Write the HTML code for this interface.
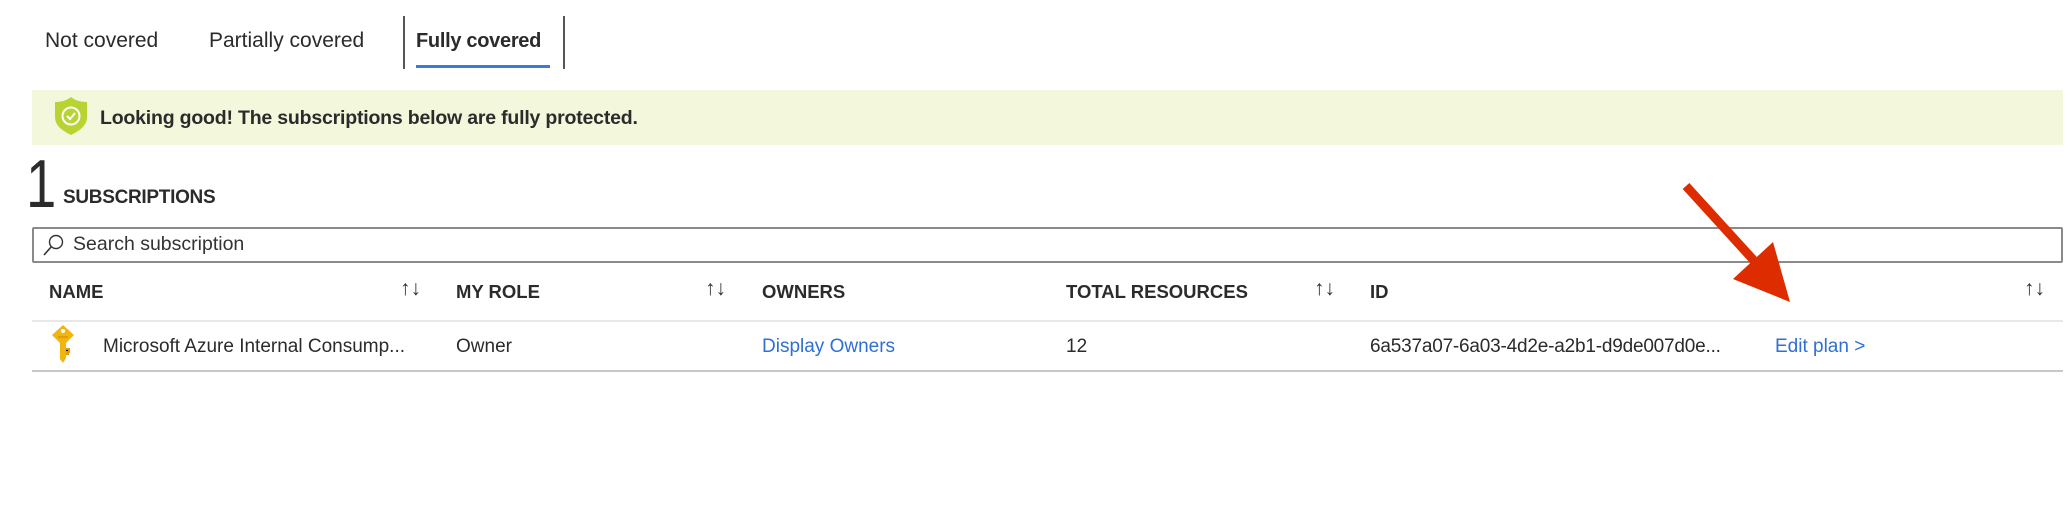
<!DOCTYPE html>
<html><head><meta charset="utf-8"><style>
*{margin:0;padding:0;box-sizing:border-box}
body{width:2072px;height:520px;background:#fff;position:relative;overflow:hidden;font-family:"Liberation Sans",sans-serif;color:#2b2b2b}
.a{position:absolute;white-space:nowrap}
.tab{font-size:21px;top:29px;color:#2b2b2b}
.h{font-size:18.5px;font-weight:bold;top:281px;color:#2b2b2b}
.s{font-size:21px;top:277px;color:#333}
.r{font-size:19px;top:336px}
.blue{color:#2f6fd6}
</style></head><body>
<div class="a tab" style="left:45px">Not covered</div>
<div class="a tab" style="left:209px">Partially covered</div>
<div class="a" style="left:403px;top:16px;width:2px;height:53px;background:#555"></div>
<div class="a" style="left:563px;top:16px;width:2px;height:53px;background:#555"></div>
<div class="a tab" style="left:416px;font-weight:bold;font-size:20px;top:30px;letter-spacing:-0.3px">Fully covered</div>
<div class="a" style="left:416px;top:65px;width:134px;height:3px;background:#3b7ad6"></div>

<div class="a" style="left:32px;top:90px;width:2031px;height:55px;background:#f3f8dc"></div>
<svg class="a" style="left:55px;top:97px" width="32" height="38" viewBox="0 0 32 38"><path d="M16 0 C11 4 5 5 0 5 V20 C0 29 8 34 16 38 C24 34 32 29 32 20 V5 C27 5 21 4 16 0Z" fill="#b8d432"/><circle cx="16" cy="19" r="8.5" fill="none" stroke="#fff" stroke-width="2"/><path d="M12 19 l3 3 l5 -6" fill="none" stroke="#fff" stroke-width="2"/></svg>
<div class="a" style="left:100px;top:107px;font-size:19.5px;font-weight:bold;color:#2b2b2b;letter-spacing:-0.2px">Looking good! The subscriptions below are fully protected.</div>

<div class="a" style="left:26px;top:150px;font-size:68px;line-height:68px;color:#2b2b2b;transform:scaleX(0.8);transform-origin:left">1</div>
<div class="a" style="left:63px;top:187px;font-size:19px;font-weight:bold;letter-spacing:-0.3px">SUBSCRIPTIONS</div>

<div class="a" style="left:32px;top:227px;width:2031px;height:36px;border:2px solid #8a8a8a;border-radius:2px"></div>
<svg class="a" style="left:42px;top:233px" width="24" height="24" viewBox="0 0 24 24"><circle cx="14" cy="9" r="6.5" fill="none" stroke="#333" stroke-width="1.4"/><path d="M9.5 13.5 L2 22" stroke="#333" stroke-width="1.6"/></svg>
<div class="a" style="left:73px;top:233px;font-size:19.5px;color:#333">Search subscription</div>

<div class="a h" style="left:49px">NAME</div>
<div class="a s" style="left:400px">↑↓</div>
<div class="a h" style="left:456px">MY ROLE</div>
<div class="a s" style="left:705px">↑↓</div>
<div class="a h" style="left:762px">OWNERS</div>
<div class="a h" style="left:1066px">TOTAL RESOURCES</div>
<div class="a s" style="left:1314px">↑↓</div>
<div class="a h" style="left:1370px">ID</div>
<div class="a s" style="left:2024px">↑↓</div>
<div class="a" style="left:32px;top:320px;width:2031px;height:2px;background:#e8e8e8"></div>

<svg class="a" style="left:52px;top:325px" width="22" height="38" viewBox="0 0 22 38"><path d="M11 0 L22 10 L14 18 V33 L11 38 L8 34 V18 L0 10Z" fill="#f2b50f"/><path d="M14 24 h3 v3 h-3 M14 29 h3" stroke="#e29d00" stroke-width="2"/><circle cx="11" cy="6" r="2" fill="#fff"/><rect x="6" y="11" width="10" height="2" fill="#e29d00"/></svg>
<div class="a r" style="left:103px">Microsoft Azure Internal Consump...</div>
<div class="a r" style="left:456px">Owner</div>
<div class="a r blue" style="left:762px">Display Owners</div>
<div class="a r" style="left:1066px">12</div>
<div class="a r" style="left:1370px;letter-spacing:-0.2px">6a537a07-6a03-4d2e-a2b1-d9de007d0e...</div>
<div class="a r blue" style="left:1775px">Edit plan &gt;</div>
<div class="a" style="left:32px;top:370px;width:2031px;height:2px;background:#c8c8c8"></div>

<svg class="a" style="left:0;top:0" width="2072" height="520"><line x1="1686" y1="186" x2="1758" y2="265" stroke="#dd2c00" stroke-width="9"/><polygon points="1790,302 1733,279 1773,242" fill="#dd2c00"/></svg>
</body></html>
